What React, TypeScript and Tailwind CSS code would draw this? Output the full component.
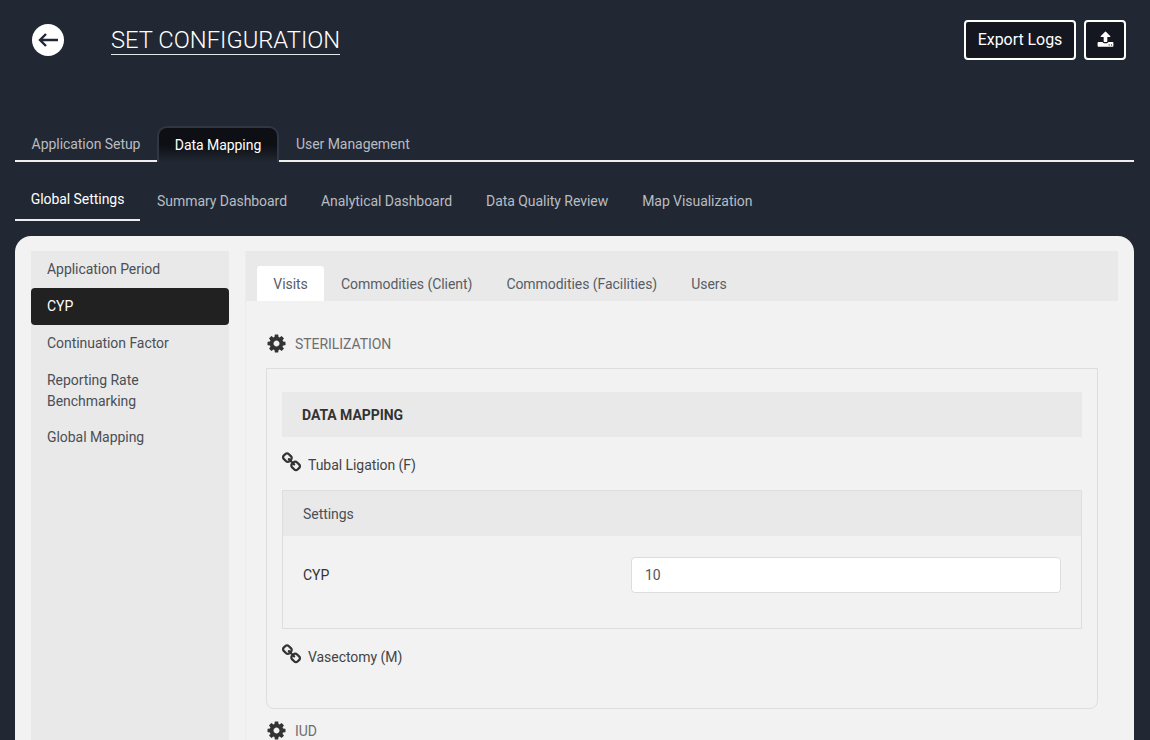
const mainTabs = ['Application Setup', 'Data Mapping', 'User Management'];
const subTabs = ['Global Settings', 'Summary Dashboard', 'Analytical Dashboard', 'Data Quality Review', 'Map Visualization'];
const sideItems = ['Application Period', 'CYP', 'Continuation Factor', 'Reporting Rate Benchmarking', 'Global Mapping'];
const innerTabs = ['Visits', 'Commodities (Client)', 'Commodities (Facilities)', 'Users'];

function CogIcon() {
  return (
    <svg viewBox="0 0 1792 1792" className="h-[21px] w-[21px] shrink-0 fill-[#333333]">
      <path d="M1152 896q0-106-75-181t-181-75-181 75-75 181 75 181 181 75 181-75 75-181zm512-109v222q0 12-8 23t-20 13l-185 28q-19 54-39 91 35 50 107 138 10 12 10 25t-9 23q-27 37-99 108t-94 71q-12 0-26-9l-138-108q-44 23-91 38-16 136-29 186-7 27-35 27h-222q-14 0-24.5-8.5t-11.5-21.5l-28-184q-49-16-90-37l-141 107q-10 9-25 9-14 0-25-11-126-114-165-168-7-10-7-23 0-12 8-23 15-21 51-66.5t54-70.5q-27-50-41-99l-183-27q-13-2-21-12.5t-8-23.5v-222q0-12 8-23t19-13l186-28q14-46 39-92-40-57-107-138-10-12-10-24 0-10 9-23 26-36 98.5-107.5t94.5-71.5q13 0 26 10l138 107q44-23 91-38 16-136 29-186 7-27 35-27h222q14 0 24.5 8.5t11.5 21.5l28 184q49 16 90 37l142-107q9-9 24-9 13 0 25 10 129 119 165 170 7 8 7 22 0 12-8 23-15 21-51 66.5t-54 70.5q26 50 41 98l183 28q13 2 21 12.5t8 23.5z" />
    </svg>
  );
}

function LinkIcon() {
  return (
    <svg viewBox="0 0 1792 1792" className="-ml-[1px] -mt-[4px] h-[21px] w-[21px] shrink-0 fill-[#333333]">
      <path d="M1520 1216q0-40-28-68l-208-208q-28-28-68-28-42 0-72 32 3 3 19 18.5t21.5 21.5 15 19 13 25.5 3.5 27.5q0 40-28 68t-68 28q-15 0-27.5-3.5t-25.5-13-19-15-21.5-21.5-18.5-19q-33 31-33 73 0 40 28 68l206 207q27 27 68 27 40 0 68-26l147-146q28-28 28-67zm-703-705q0-40-28-68l-206-207q-28-28-68-28-39 0-68 27l-147 146q-28 28-28 67 0 40 28 68l208 208q27 27 68 27 42 0 72-31-3-3-19-18.5t-21.5-21.5-15-19-13-25.5-3.5-27.5q0-40 28-68t68-28q15 0 27.5 3.5t25.5 13 19 15 21.5 21.5 18.5 19q33-31 33-73zm895 705q0 120-85 203l-147 146q-83 83-203 83-121 0-204-85l-206-207q-83-83-83-203 0-123 88-209l-88-88q-86 88-208 88-120 0-204-84l-208-208q-84-84-84-204t85-203l147-146q83-83 203-83 121 0 204 85l206 207q83 83 83 203 0 123-88 209l88 88q86-88 208-88 120 0 204 84l208 208q84 84 84 204z" />
    </svg>
  );
}

export default function App() {
  return (
    <div className="h-[740px] overflow-hidden bg-[#212833] font-['Roboto',sans-serif] text-[14px] tracking-[-0.05px]">
      {/* header */}
      <div className="flex h-[126px] items-start justify-between pl-[32px] pr-[24px] pt-[20px]">
        <div className="flex items-start">
          <button className="mt-[4px] flex h-[32px] w-[32px] items-center justify-center rounded-full bg-white">
            <svg viewBox="0 0 20 16" className="h-[16px] w-[20px] fill-none stroke-[#212833] stroke-[2.4]">
              <path d="M20 8H2M8 2L2 8l6 6" />
            </svg>
          </button>
          <h1 className="ml-[47px] mt-[6px] border-b border-[#e5e7eb] text-[23.75px] leading-[28px] font-light tracking-normal text-white">
            SET CONFIGURATION
          </h1>
        </div>
        <div className="flex gap-[8px]">
          <button className="h-[40px] w-[112px] rounded-[4px] border-2 border-white bg-[#141720] text-[16px] text-white">
            Export Logs
          </button>
          <button className="flex h-[40px] w-[42px] items-center justify-center rounded-[4px] border-2 border-white bg-[#141720]">
            <svg viewBox="0 0 1792 1792" className="-mt-[1px] h-[17px] w-[17px] fill-white">
              <path d="M1344 1472q0-26-19-45t-45-19-45 19-19 45 19 45 45 19 45-19 19-45zm256 0q0-26-19-45t-45-19-45 19-19 45 19 45 45 19 45-19 19-45zm128-224v320q0 40-28 68t-68 28h-1472q-40 0-68-28t-28-68v-320q0-40 28-68t68-28h427q21 56 70.5 92t110.5 36h256q61 0 110.5-36t70.5-92h427q40 0 68 28t28 68zm-325-648q-17 40-59 40h-256v448q0 26-19 45t-45 19h-256q-26 0-45-19t-19-45v-448h-256q-42 0-59-40-17-39 14-69l448-448q18-19 45-19t45 19l448 448q31 30 14 69z" />
            </svg>
          </button>
        </div>
      </div>

      {/* main tabs */}
      <div className="mx-[15px] flex h-[36px] w-[1119px] items-stretch border-b-2 border-[#eeeeee]">
        {mainTabs.map((t) =>
          t === 'Data Mapping' ? (
            <div
              key={t}
              className="mb-[-2px] flex w-[122px] items-center justify-center rounded-t-[10px] border-x-2 border-t-2 border-[#2f3644] bg-gradient-to-b from-[#0d0f14] from-50% to-[#212833] text-white"
            >
              {t}
            </div>
          ) : (
            <div
              key={t}
              className={`flex items-center pt-[2px] text-[#b9bcc2] ${t === 'Application Setup' ? 'w-[142px] justify-center' : 'px-[17px]'}`}
            >
              {t}
            </div>
          )
        )}
      </div>

      {/* sub tabs */}
      <div className="mx-[15px] mt-[18px] flex h-[41px] items-stretch">
        {subTabs.map((t, i) => (
          <div
            key={t}
            className={
              i === 0
                ? 'flex w-[125px] items-center justify-center border-b-2 border-[#eeeeee] text-white'
                : 'flex items-center px-[17px] pt-[2px] text-[#b9bcc2]'
            }
          >
            {t}
          </div>
        ))}
      </div>

      {/* panel */}
      <div className="mx-[15px] mt-[15px] flex h-[520px] w-[1119px] gap-[16px] rounded-t-[16px] bg-[#f2f2f2] px-[16px] pt-[15px]">
        <div className="h-full w-[198px] shrink-0 bg-[#e9e9e9]">
          {sideItems.map((s) => (
            <div
              key={s}
              className={
                s === 'CYP'
                  ? 'flex h-[37px] items-center rounded-[4px] bg-[#212121] px-[16px] text-white'
                  : s === 'Global Mapping'
                    ? 'px-[16px] pb-[8px] pt-[7px] leading-[21px] text-[#4b4f56]'
                    : 'px-[16px] py-[8px] leading-[21px] text-[#4b4f56]'
              }
            >
              {s}
            </div>
          ))}
        </div>

        <div className="min-w-0 flex-1 border-l border-[#ececec]">
          <div className="flex h-[50px] items-end bg-[#e9e9e9] pl-[11px]">
            {innerTabs.map((t, i) => (
              <div
                key={t}
                className={
                  i === 0
                    ? 'flex h-[35px] w-[67px] items-center justify-center rounded-t-[3px] bg-white pt-[2px] text-[#585d65]'
                    : 'flex h-[35px] items-center px-[17px] pt-[2px] text-[#585d65]'
                }
              >
                {t}
              </div>
            ))}
          </div>

          <div className="px-[20px]">
            <div className="flex h-[67px] items-center pt-[17px]">
              <CogIcon />
              <span className="ml-[8px] mt-[3px] text-[#6e6e6e]">STERILIZATION</span>
            </div>

            <div className="h-[341px] rounded-b-[8px] border border-[#dedede] px-[15px] pt-[23px]">
              <div className="flex h-[45px] items-center bg-[#e9e9e9] pl-[20px] pt-[2px] font-bold text-[#333333]">DATA MAPPING</div>

              <div className="flex h-[53px] items-center pt-[1px]">
                <LinkIcon />
                <span className="ml-[6px] mt-[2px] text-[#444444]">Tubal Ligation (F)</span>
              </div>

              <div className="h-[139px] border border-[#dedede]">
                <div className="flex h-[45px] items-center bg-[#e9e9e9] px-[20px] pt-[2px] text-[#4b4f56]">Settings</div>
                <div className="flex items-center px-[20px] pt-[21px]">
                  <span className="w-[328px] text-[#333333]">CYP</span>
                  <input
                    readOnly
                    value="10"
                    className="h-[36px] w-[430px] rounded-[4px] border border-[#dddddd] bg-white px-[13px] text-[14px] text-[#555555]"
                  />
                </div>
              </div>

              <div className="flex h-[55px] items-center">
                <LinkIcon />
                <span className="ml-[6px] mt-[2px] text-[#444444]">Vasectomy (M)</span>
              </div>
            </div>

            <div className="flex h-[42px] items-center">
              <CogIcon />
              <span className="ml-[8px] mt-[3px] text-[#6e6e6e]">IUD</span>
            </div>
          </div>
        </div>
      </div>
    </div>
  );
}
